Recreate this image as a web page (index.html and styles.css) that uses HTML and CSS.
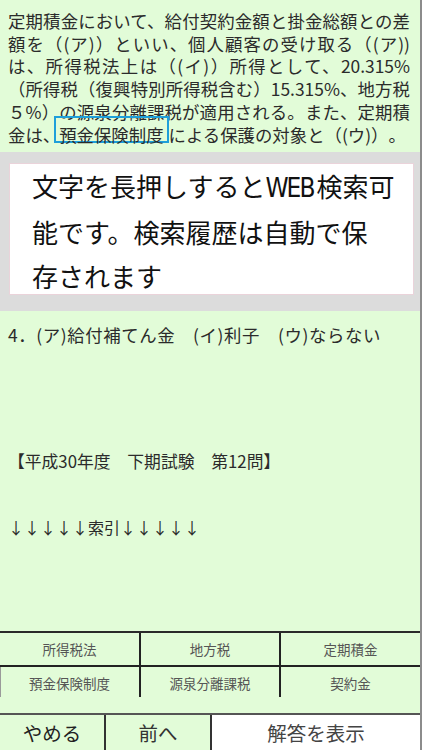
FILE: index.html
```html
<!DOCTYPE html>
<html lang="ja">
<head>
<meta charset="utf-8">
<link rel="stylesheet" href="styles.css">
</head>
<body>
<div class="screen">
  <div class="content">
    <div class="question">
      <div class="line">定期積金において、給付契約金額と掛金総額との差</div>
      <div class="line">額を（(ア)）といい、個人顧客の受け取る（(ア))</div>
      <div class="line">は、所得税法上は（(イ)）所得として、20.315%</div>
      <div class="line">（所得税（復興特別所得税含む）15.315%、地方税</div>
      <div class="line">５%）の源泉分離課税が適用される。また、定期積</div>
      <div class="line end">金は、<span class="highlight">預金保険制度</span>による保護の対象と（(ウ)）。</div>
    </div>
    <div class="answer">4．(ア)給付補てん金　(イ)利子　(ウ)ならない</div>
    <div class="source">【平成30年度　下期試験　第12問】</div>
    <div class="index">↓↓↓↓↓索引↓↓↓↓↓</div>

    <div class="overlay">
      <div class="toast">
        <div>文字を長押しすると<span class="latin">WEB</span>検索可</div>
        <div>能です。検索履歴は自動で保</div>
        <div>存されます</div>
      </div>
    </div>
  </div>

  <div class="keywords">
    <div class="kw r1">所得税法</div>
    <div class="kw r1">地方税</div>
    <div class="kw r1 last">定期積金</div>
    <div class="kw r2 first">預金保険制度</div>
    <div class="kw r2">源泉分離課税</div>
    <div class="kw r2 last">契約金</div>
  </div>

  <div class="actions">
    <div class="btn quit">やめる</div>
    <div class="btn prev">前へ</div>
    <div class="btn show">解答を表示</div>
  </div>
</div>
</body>
</html>
```

FILE: styles.css
```css
html, body {
  margin: 0;
  padding: 0;
}

body {
  font-family: "Noto Sans CJK JP", "Noto Sans", sans-serif;
  background: #e2fcd8;
  text-spacing-trim: space-all;
}

.screen {
  width: 422px;
  height: 750px;
  box-sizing: border-box;
  border-right: 2px solid #8c8c8c;
  background: #e2fcd8;
  display: flex;
  flex-direction: column;
  position: relative;
  overflow: hidden;
}

.content {
  flex: 1;
  padding: 10px 0 0 8px;
  color: #2b2b2b;
}

.question {
  width: 402px;
  font-size: 17.4px;
  line-height: 22.7px;
}

.line {
  text-align: justify;
  text-align-last: justify;
  text-justify: inter-character;
}

.line.end {
  text-align: left;
  text-align-last: left;
}

.highlight {
  display: inline-block;
  border: 2px solid #1e9fda;
  line-height: 13px;
  padding: 10px 3px 0 3px;
  margin: -10px 0 -2px -6px;
}

.answer {
  margin-top: 178px;
  font-size: 17.4px;
  line-height: 22px;
  letter-spacing: 0.6px;
  white-space: nowrap;
}

.source {
  margin-top: 104px;
  font-size: 16.8px;
  line-height: 22px;
  white-space: nowrap;
}

.index {
  margin-top: 44px;
  font-size: 16px;
  line-height: 22px;
  white-space: nowrap;
}

.overlay {
  position: absolute;
  top: 152px;
  left: 0;
  width: 422px;
  height: 159px;
  box-sizing: border-box;
  background: #dcdcdc;
  padding: 11px 8px 0 9px;
}

.toast {
  background: #fff;
  border: 1px solid #ead3da;
  height: 132px;
  box-sizing: border-box;
  padding-left: 22px;
  font-size: 26px;
  line-height: 44px;
  color: #111;
  white-space: nowrap;
}

.latin {
  font-family: "Liberation Sans Narrow", "DejaVu Sans Condensed", "Noto Sans", sans-serif;
  letter-spacing: -2px;
  margin-right: 3px;
}

.keywords {
  display: grid;
  grid-template-columns: 141px 140px 1fr;
  border-top: 2px solid #2a2a2a;
  margin-bottom: 16px;
}

.kw {
  display: flex;
  align-items: center;
  justify-content: center;
  font-size: 13.5px;
  color: #555;
  border-right: 2px solid #222;
}

.kw.last {
  border-right: none;
}

.kw.r1 {
  height: 32px;
  border-bottom: 2px solid #222;
}

.kw.r2 {
  height: 28px;
  padding-top: 2px;
}

.kw.first {
  box-shadow: inset 1px 0 0 #9a9a9a;
}

.actions {
  display: grid;
  grid-template-columns: 106px 106px 1fr;
  border-top: 2px solid #555;
  height: 37px;
  box-sizing: border-box;
}

.btn {
  display: flex;
  align-items: center;
  justify-content: center;
  font-size: 19.5px;
  color: #222;
}

.quit,
.prev {
  border-right: 2px solid #333;
}

.prev {
  color: #333;
}

.show {
  background: #fff;
  color: #444;
}
```
